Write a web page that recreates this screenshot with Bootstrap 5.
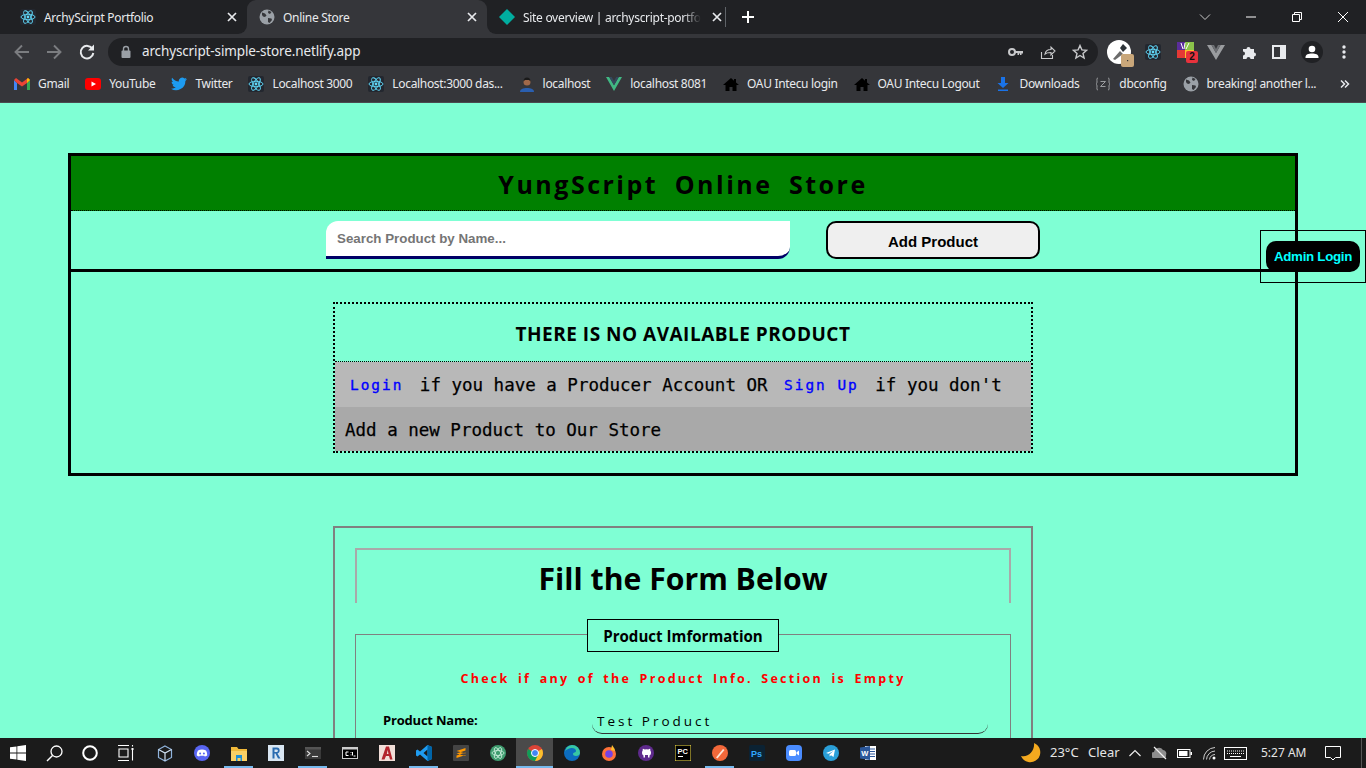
<!DOCTYPE html>
<html lang="en">
<head>
<meta charset="utf-8">
<title>Online Store</title>
<link href="https://cdn.jsdelivr.net/npm/bootstrap@5.3.0/dist/css/bootstrap.min.css" rel="stylesheet">
<style>
html,body{height:100%;overflow:hidden}
body{background:#7fffd4;color:#000;font-family:"Open Sans",sans-serif}
.shell{height:768px}
.ui{font-family:"Noto Sans",sans-serif;color:#e8eaed;font-size:12px}
.tabstrip{height:34px;background:#202124}
.tabx{height:34px;width:240px;padding:0 7px 0 12px;gap:8px;flex:none;position:relative;white-space:nowrap}
.tabx.first{width:239px;margin-left:8px}
.tabx.now{background:#35363a;border-radius:9px 9px 0 0}
.tabx .ttl{flex:1;letter-spacing:-.3px;padding-top:1px}
.tabx.last{width:238px}
.tabx.last .ttl{-webkit-mask-image:linear-gradient(90deg,#000 90%,transparent);mask-image:linear-gradient(90deg,#000 90%,transparent)}
.tabx.last::before,.tabx.first::after{content:"";position:absolute;bottom:0;width:9px;height:9px;background:#35363a}
.tabx.last::before{left:0}
.tabx.first::after{right:0}
.tabx.last .corner,.tabx.first .corner{position:absolute;bottom:0;width:9px;height:9px;background:#202124;z-index:1}
.tabx.last .corner{left:0;border-bottom-left-radius:9px}
.tabx.first .corner{right:0;border-bottom-right-radius:9px}
.vsep{width:1px;height:20px;background:#5f6368;margin:0 14px 0 0}
.winbtns{margin-left:auto;display:flex;align-items:center}
.winbtn{width:46px;display:flex;justify-content:center}
.toolbar{height:33px;background:#35363a;padding:2px 0 0 12px}
.omni{width:990px;height:28px;background:#202124;border-radius:14px;margin-left:12px;padding:0 10px 0 12px;font-size:13.5px;letter-spacing:-.13px}
.urltxt{margin-left:10px}
.bookbar{height:36px;background:#35363a;border-bottom:1px solid #4a4c50;padding:0 0 1px 14px;gap:16px;white-space:nowrap}
.bm{gap:8px;letter-spacing:-.33px}
.pagearea{height:635px;overflow:hidden;position:relative;background:#7fffd4}
.storebox{margin:50px 68px 0;border:3px solid #000;height:323px}
.storehead{height:55px;background:#008000;border-bottom:1px dotted #000;font-size:25px;font-weight:700;letter-spacing:2.5px;word-spacing:7.500px;padding-top:4px}
.searchrow{height:61px;border-bottom:3px solid #000;gap:36px}
.searchin{width:464px;height:38px;background:#fff;border:0;border-bottom:3px solid #000066;border-radius:12px 0 12px 0;padding:0 11px;font:bold 13.33px "Liberation Sans",sans-serif;color:#000;outline:0}
.searchin::placeholder{color:#757575;opacity:1}
.addbtn{width:214px;height:38px;background:#efefef;border:2px solid #000;border-radius:10px;font:bold 15px "Liberation Sans",sans-serif;color:#000;padding:2px 0 0}
.noticebox{width:700px;height:151px;margin:30px auto 0;border:2px dotted #000}
.noticehead{height:58px;border-bottom:1px dotted #000;font-size:19px;font-weight:700;letter-spacing:.5px;padding-top:3px}
.mono{font-family:"DejaVu Sans Mono",monospace;font-size:17.5px;white-space:pre;-webkit-text-stroke:.25px #000;padding-top:2px}
.rowa{height:45px;background:#b8b8b8;padding-left:15px;padding-top:1px}
.rowb{height:44px;background:#a9a9a9;padding-left:10px}
.blink{color:#00f;font-weight:400;font-size:14.4px;letter-spacing:2px;margin:0 6px 0 0;padding-top:2px;-webkit-text-stroke:.35px #00f}
.blink.mid{margin-left:6px}
.formbox{width:700px;height:400px;margin:50px auto 0;border:2px solid #808080;padding:20px 20px 0}
.fillhead{height:55px;border:2px solid #a9a9a9;border-bottom:0;font-size:30.2px;font-weight:700;line-height:1;padding-top:14px}
.fset{margin-top:31px;border-top:1px solid #808080;border-left:1px solid #808080;border-right:1px solid #808080;height:200px;position:relative;padding-top:35px}
.legendx{position:absolute;top:-16px;left:231px;width:192px;height:33px;border:1px solid #000;background:#7fffd4;font-size:15.1px;font-weight:700;padding-top:1px}
.warn{color:#f00;font-size:12.5px;font-weight:700;letter-spacing:2.25px;word-spacing:3px;line-height:17px}
.frow{margin-top:23px;padding-left:27px}
.flabel{width:209px;font:bold 13px "Open Sans",sans-serif;letter-spacing:-.2px;padding-bottom:4px}
.finput{width:396px;height:24px;border:0;border-bottom:1px solid #333;border-radius:0 0 10px 10px;background:transparent;padding:0 5px 2px 5px;font-family:"Open Sans",sans-serif;font-size:13.5px;letter-spacing:3px;color:#000;outline:0}
.adminwrap{position:absolute;left:1260px;top:127px;width:106px;height:53px;border:1px solid #000;padding:10px 0 0 5px}
.adminbtn{width:94px;height:31px;background:#000;color:#0ff;border:0;border-radius:10px;font:bold 13.33px "Liberation Sans",sans-serif;padding:0;letter-spacing:-.3px}
.taskbar{height:30px;background:#1b1b1b;color:#e6e6e6;font-family:"Noto Sans",sans-serif;font-size:13px;position:relative}
.tslot{width:36px;height:30px;flex:none;display:flex;align-items:center;justify-content:center;position:relative}
.tslot.w{width:37px}
.tslot.on::after{content:"";position:absolute;bottom:0;left:4px;right:4px;height:2px;background:#76b9ed}
.tslot.act{background:#4a4a4a}
.tslot.act::after{content:"";position:absolute;bottom:0;height:2px;background:#76b9ed;left:0;right:0}
.spacer{width:2px;flex:none}
.trayi{position:absolute;top:0;height:30px;display:flex;align-items:center;justify-content:center}
svg{display:block;flex:none}
.tb1{margin-left:12px}.tb2{margin-left:14px}
.ext0{width:24px;height:24px;margin-left:9px}.extbadge{left:14px;top:14px}
.ext1{margin-left:14px}.ext2{width:20px;height:20px;margin-left:16px}
.count2{left:9px;top:9px;width:12px;height:12px;background:#e8323c;color:#111;border-radius:2px;font:bold 10px "Liberation Sans",sans-serif}
.ext3{margin-left:10px}.ext4{margin-left:17px}.ext5{margin-left:14px}.ext6{margin-left:15px}.ext7{margin-left:19px}
.t1{left:1019px;width:24px}.t2{left:1050px}.t3{left:1088px}.t4{left:1129px;width:12px}.t5{left:1152px;width:16px}.t6{left:1177px;width:15px}.t7{left:1203px;width:13px}.t8{left:1224px;width:23px}.t9{left:1261px;font-size:12px}.t10{left:1325px;width:16px}.t11{left:1361px;width:1px;background:#555}
</style>
</head>
<body>
<svg width="0" height="0" class="position-absolute">
<defs>
<symbol id="react" viewBox="0 0 16 16"><rect width="16" height="16" rx="2" fill="#23272f"/><g fill="none" stroke="#61dafb" stroke-width=".9"><ellipse cx="8" cy="8" rx="7" ry="2.7"/><ellipse cx="8" cy="8" rx="7" ry="2.7" transform="rotate(60 8 8)"/><ellipse cx="8" cy="8" rx="7" ry="2.7" transform="rotate(120 8 8)"/></g><circle cx="8" cy="8" r="1.4" fill="#61dafb"/></symbol>
<symbol id="globe" viewBox="0 0 16 16"><circle cx="8" cy="8" r="7.5" fill="#9aa0a6"/><path d="M3 3.5l3 1 1.500 2-1.500 1.500-2-.5-1-1.500zM9 9l3.500.5.500 1.500-2.500 3-1.500-1zM9.500 1.500l3 1.500-1.500 2-2-1z" fill="#35363a"/></symbol>
<symbol id="house" viewBox="0 0 16 16"><path d="M8 2L0 9h2.500v6h4v-4h3v4h4V9H16l-3-2.600V3h-2v1.700z" fill="#000"/></symbol>
</defs>
</svg>
<div class="shell d-flex flex-column">
<div class="ui tabstrip d-flex align-items-center">
  <div class="tabx first d-flex align-items-center"><span class="corner"></span><svg width="16" height="16"><use href="#react"/></svg><span class="ttl">ArchyScirpt Portfolio</span><svg width="16" height="16" viewBox="0 0 16 16"><path d="M4 4l8 8M12 4l-8 8" stroke="#e8eaed" stroke-width="1.700"/></svg></div>
  <div class="tabx now d-flex align-items-center"><svg width="16" height="16"><use href="#globe"/></svg><span class="ttl">Online Store</span><svg width="16" height="16" viewBox="0 0 16 16"><path d="M4 4l8 8M12 4l-8 8" stroke="#e8eaed" stroke-width="1.700"/></svg></div>
  <div class="tabx last d-flex align-items-center"><span class="corner"></span><svg width="16" height="16" viewBox="0 0 16 16"><path d="M8 0l8 8-8 8-8-8z" fill="#00ad9f"/></svg><span class="ttl">Site overview | archyscript-portfo</span><svg width="16" height="16" viewBox="0 0 16 16"><path d="M4 4l8 8M12 4l-8 8" stroke="#e8eaed" stroke-width="1.700"/></svg></div>
  <div class="vsep"></div>
  <svg width="16" height="16" viewBox="0 0 16 16"><path d="M8 2v12M2 8h12" stroke="#fff" stroke-width="2"/></svg>
  <div class="winbtns">
    <div class="winbtn me-0"><svg width="12" height="12" viewBox="0 0 12 12"><path d="M1 3.500l5 5 5-5" fill="none" stroke="#c8c8c8"/></svg></div>
    <div class="winbtn"><svg width="12" height="12" viewBox="0 0 12 12"><path d="M1 6h10" stroke="#fff"/></svg></div>
    <div class="winbtn"><svg width="12" height="12" viewBox="0 0 12 12"><path d="M1.500 3.500h7v7h-7zM3.500 3.500v-2h7v7h-2" fill="none" stroke="#fff"/></svg></div>
    <div class="winbtn"><svg width="12" height="12" viewBox="0 0 12 12"><path d="M1 1l10 10M11 1L1 11" stroke="#fff"/></svg></div>
  </div>
</div>
<div class="ui toolbar d-flex align-items-center">
  <svg width="20" height="20" viewBox="0 0 20 20"><path d="M17 10H4.500M10 3.500L3.500 10l6.500 6.500" fill="none" stroke="#7b7d80" stroke-width="1.900"/></svg>
  <svg width="20" height="20" viewBox="0 0 20 20" class="tb1"><path d="M3 10h12.500M10 3.500l6.500 6.500-6.500 6.500" fill="none" stroke="#7b7d80" stroke-width="1.900"/></svg>
  <svg width="18" height="18" viewBox="0 0 18 18" class="tb2"><path d="M14.500 6A6.300 6.300 0 1 0 15.300 10" fill="none" stroke="#e8eaed" stroke-width="2"/><path d="M16 1.500v6h-6z" fill="#e8eaed"/></svg>
  <div class="omni d-flex align-items-center">
    <svg width="12" height="14" viewBox="0 0 12 14"><path d="M3.500 6V4a2.500 2.500 0 0 1 5 0v2" fill="none" stroke="#9aa0a6" stroke-width="1.400"/><rect x="1.500" y="5.500" width="9" height="7.500" rx="1" fill="#9aa0a6"/></svg>
    <span class="urltxt flex-grow-1">archyscript-simple-store.netlify.app</span>
    <svg width="16" height="16" viewBox="0 0 16 16"><circle cx="4" cy="8" r="3" fill="none" stroke="#c8c9cb" stroke-width="2"/><path d="M7 7h8v2.500h-1.500V11H12V9.500h-1V11H9.500V9H7z" fill="#c8c9cb"/></svg>
    <svg class="ms-3" width="16" height="16" viewBox="0 0 16 16"><path d="M1.500 8v6.500h11V11M5 10c.5-3 3-4.500 6-4.500V3l4 4-4 4V8.500c-2.500 0-4.500 0-6 1.500z" fill="none" stroke="#c8c9cb" stroke-width="1.100"/></svg>
    <svg class="ms-3" width="16" height="16" viewBox="0 0 16 16"><path d="M8 1.500l1.900 4.400 4.700.4-3.600 3.100 1.100 4.600L8 11.500l-4.100 2.500 1.100-4.600L1.400 6.300l4.700-.4z" fill="none" stroke="#c8c9cb" stroke-width="1.400"/></svg>
  </div>
  <div class="position-relative ext0">
    <svg width="24" height="24" viewBox="0 0 24 24"><circle cx="12" cy="12" r="12" fill="#fff"/><path d="M6 19l7-8 3 3-8 6z" fill="#6b6b6b"/><path d="M13 8l3-4 4 4-4 4z" fill="#2d3338"/></svg>
    <svg class="position-absolute extbadge" width="13" height="13" viewBox="0 0 13 13"><rect width="13" height="13" rx="2" fill="#c9a77a"/><rect x="6" y="6" width="1.200" height="1.200" fill="#333"/></svg>
  </div>
  <svg width="16" height="16" class="ext1"><use href="#react"/></svg>
  <div class="position-relative ext2">
    <svg width="17" height="16" viewBox="0 0 17 16"><path d="M0 0h8v8H0z" fill="#5b2d9b"/><path d="M8 0h9v8H8z" fill="#8bc34a"/><path d="M0 8h8v8H0z" fill="#e53935"/><path d="M8 8h9v8H8z" fill="#fbc02d"/><path d="M4 1l2 6M8 1L7 7M12 1L9 7" stroke="#fff"/></svg>
    <span class="position-absolute d-flex align-items-center justify-content-center count2">2</span>
  </div>
  <svg width="18" height="16" viewBox="0 0 18 16" class="ext3"><path d="M0 1h4.500L9 9l4.500-8H18L9 16z" fill="#9a9c9f"/><path d="M4.500 1H7l2 4 2-4h2.500L9 9z" fill="#6e7074"/></svg>
  <svg width="16" height="16" viewBox="0 0 16 16" class="ext4"><path d="M1 5h3.500a2 2 0 1 1 4 0H12v3.500a2 2 0 1 1 0 4V15H8.500a2 2 0 1 0-4 0H1v-3.500a2 2 0 1 0 0-4z" fill="#e8eaed"/></svg>
  <svg width="14" height="14" viewBox="0 0 14 14" class="ext5"><path d="M0 0h14v14H0z" fill="#e8eaed"/><path d="M2 2h6v10H2z" fill="#35363a"/></svg>
  <svg width="22" height="22" viewBox="0 0 22 22" class="ext6"><circle cx="11" cy="11" r="11" fill="#202124"/><circle cx="11" cy="8" r="3.300" fill="#fff"/><path d="M4.500 16c0-2.500 3-3.500 6.500-3.500s6.500 1 6.500 3.500v1h-13z" fill="#fff"/></svg>
  <svg width="4" height="14" viewBox="0 0 4 14" class="ext7"><circle cx="2" cy="2" r="1.700" fill="#e8eaed"/><circle cx="2" cy="7" r="1.700" fill="#e8eaed"/><circle cx="2" cy="12" r="1.700" fill="#e8eaed"/></svg>
</div>
<div class="ui bookbar d-flex align-items-center">
  <div class="bm d-flex align-items-center"><svg width="16" height="12" viewBox="0 0 16 12"><path d="M0 2v10h3V5z" fill="#4285f4"/><path d="M13 5v7h3V2z" fill="#34a853"/><path d="M0 2l3 3 5 3.500L13 5l3-3-2-2-6 4.500L2 0z" fill="#ea4335"/><path d="M13 5l3-3-2-2-1 1z" fill="#fbbc04"/></svg><span>Gmail</span></div>
  <div class="bm d-flex align-items-center"><svg width="16" height="12" viewBox="0 0 16 12"><rect width="16" height="12" rx="3" fill="#f00"/><path d="M6.500 3.500v5L11 6z" fill="#fff"/></svg><span>YouTube</span></div>
  <div class="bm d-flex align-items-center"><svg width="16" height="14" viewBox="0 0 16 14"><path d="M16 2c-.6.300-1.200.4-1.900.5.700-.4 1.200-1 1.400-1.800-.6.400-1.300.7-2 .8a3.300 3.300 0 0 0-5.600 3C5.200 4.400 2.800 3.100 1.100.7.300 2.200.7 4.100 2.100 5.100c-.5 0-1-.2-1.500-.4 0 1.600 1.100 3 2.600 3.300-.5.100-1 .1-1.500 0 .4 1.300 1.600 2.300 3.100 2.300A6.600 6.600 0 0 1 0 11.700 9.300 9.300 0 0 0 14.400 4c.6-.5 1.200-1.200 1.600-2z" fill="#1d9bf0"/></svg><span>Twitter</span></div>
  <div class="bm d-flex align-items-center"><svg width="16" height="16"><use href="#react"/></svg><span>Localhost 3000</span></div>
  <div class="bm d-flex align-items-center"><svg width="16" height="16"><use href="#react"/></svg><span>Localhost:3000 das...</span></div>
  <div class="bm d-flex align-items-center"><svg width="16" height="16" viewBox="0 0 16 16"><path d="M1 16c0-3 3-4 7-4s7 1 7 4z" fill="#2a5fb0"/><circle cx="8" cy="6" r="3.500" fill="#a0694a"/><path d="M4.500 5.500C4.500 3 6 1.500 8 1.500s3.500 1.500 3.500 4L10 4H6z" fill="#1a1a1a"/></svg><span>localhost</span></div>
  <div class="bm d-flex align-items-center"><svg width="16" height="14" viewBox="0 0 16 14"><path d="M0 0h3.200L8 8.300 12.800 0H16L8 14z" fill="#41b883"/><path d="M3.200 0h2.500L8 4l2.300-4h2.500L8 8.300z" fill="#35495e"/></svg><span>localhost 8081</span></div>
  <div class="bm d-flex align-items-center"><svg width="16" height="16"><use href="#house"/></svg><span>OAU Intecu login</span></div>
  <div class="bm d-flex align-items-center"><svg width="16" height="16"><use href="#house"/></svg><span>OAU Intecu Logout</span></div>
  <div class="bm d-flex align-items-center"><svg width="16" height="16" viewBox="0 0 16 16"><path d="M6 1h4v6h3.500L8 12 2.500 7H6zM3 13.500h10V15H3z" fill="#1a73e8"/></svg><span>Downloads</span></div>
  <div class="bm d-flex align-items-center"><svg width="16" height="14" viewBox="0 0 16 14"><path d="M3 1C1.500 1 2 2.500 2 5c0 1.500-1 2-1 2s1 .5 1 2c0 2.500-.5 4 1 4M13 1c1.500 0 1 1.500 1 4 0 1.500 1 2 1 2s-1 .5-1 2c0 2.500.5 4-1 4M5.500 4.500h5l-5 5h5" fill="none" stroke="#9a9c9f"/></svg><span>dbconfig</span></div>
  <div class="bm d-flex align-items-center"><svg width="16" height="16"><use href="#globe"/></svg><span>breaking! another l...</span></div>
  <svg width="10" height="10" viewBox="0 0 10 10" class="ms-2"><path d="M1 1.500L4.500 5 1 8.500M5 1.500L8.500 5 5 8.500" fill="none" stroke="#e8eaed" stroke-width="1.500"/></svg>
</div>
<div class="pagearea">
  <div class="storebox">
    <div class="storehead d-flex align-items-center justify-content-center">YungScript Online Store</div>
    <div class="searchrow d-flex align-items-center justify-content-center">
      <input class="searchin" type="text" placeholder="Search Product by Name...">
      <button class="addbtn" type="button">Add Product</button>
    </div>
    <div class="noticebox">
      <div class="noticehead d-flex align-items-center justify-content-center">THERE IS NO AVAILABLE PRODUCT</div>
      <div class="rowa mono d-flex align-items-center"><span class="blink">Login</span><span> if you have a Producer Account OR </span><span class="blink mid">Sign Up</span><span> if you don't</span></div>
      <div class="rowb mono d-flex align-items-center">Add a new Product to Our Store</div>
    </div>
  </div>
  <div class="formbox">
    <div class="fillhead text-center">Fill the Form Below</div>
    <div class="fset">
      <div class="legendx d-flex align-items-center justify-content-center">Product Imformation</div>
      <div class="warn text-center">Check if any of the Product Info. Section is Empty</div>
      <div class="frow d-flex align-items-center"><div class="flabel">Product Name:</div><input class="finput" type="text" value="Test Product"></div>
    </div>
  </div>
  <div class="adminwrap"><button class="adminbtn" type="button">Admin Login</button></div>
</div>
<div class="taskbar d-flex align-items-center">
  <div class="tslot"><svg width="16" height="16" viewBox="0 0 16 16"><path d="M0 2.300l6.500-.9v6.200H0zM7.300 1.300L16 0v7.600H7.300zM0 8.400h6.500v6.200L0 13.700zM7.300 8.400H16V16l-8.700-1.300z" fill="#fff"/></svg></div>
  <div class="tslot"><svg width="17" height="17" viewBox="0 0 17 17"><circle cx="10.500" cy="6.500" r="5.500" fill="none" stroke="#fff" stroke-width="1.300"/><path d="M6.500 10.500L1 16" stroke="#fff" stroke-width="1.500"/></svg></div>
  <div class="tslot"><svg width="16" height="16" viewBox="0 0 16 16"><circle cx="8" cy="8" r="6.800" fill="none" stroke="#fff" stroke-width="2"/></svg></div>
  <div class="tslot"><svg width="16" height="16" viewBox="0 0 16 16"><path d="M0 .500h11M0 15.500h11M1 4h9v8H1zM14.500 0v1.500M14.500 4.500v11" fill="none" stroke="#fff" stroke-width="1.100"/><rect x="13.500" y="3" width="2" height="2" fill="#fff"/></svg></div>
  <div class="spacer"></div>
  <div class="tslot w"><svg width="16" height="17" viewBox="0 0 16 17"><path d="M8 1l6.500 3.500v8L8 16l-6.500-3.500v-8z" fill="none" stroke="#8fb3dc" stroke-width="1.200"/><path d="M1.500 4.500L8 8l6.500-3.500M8 8v8" fill="none" stroke="#cfe0f2" stroke-width="1.200"/></svg></div>
  <div class="tslot w"><svg width="16" height="16" viewBox="0 0 16 16"><circle cx="8" cy="8" r="8" fill="#5865f2"/><path d="M4 5.500c2.500-1.300 5.500-1.300 8 0 1 1.700 1.300 3.500 1.200 5-1 .7-1.800 1-2.400 1.100l-.6-.9H5.800l-.6.900c-.6-.1-1.400-.4-2.400-1.100-.1-1.500.2-3.300 1.200-5z" fill="#fff"/><circle cx="6.100" cy="8.400" r="1" fill="#5865f2"/><circle cx="9.900" cy="8.400" r="1" fill="#5865f2"/></svg></div>
  <div class="tslot w on"><svg width="16" height="15" viewBox="0 0 16 15"><path d="M0 1h6l1.500 2H16v12H0z" fill="#f0b93a"/><path d="M0 5h16v10H0z" fill="#fad165"/><path d="M5 9h6v6H9.500v-3h-3v3H5z" fill="#1d8fd6"/></svg></div>
  <div class="tslot w"><svg width="16" height="16" viewBox="0 0 16 16"><rect width="16" height="16" fill="#d9e6f2"/><path d="M4.500 2.500h4.500c3.500 0 3.500 5.500 .5 6l3 5h-2.500l-2.500-5H6.500v5h-2zM6.500 4.500v2.500h2.500c1.200 0 1.200-2.500 0-2.500z" fill="#2b6cb0"/></svg></div>
  <div class="tslot w on"><svg width="16" height="12" viewBox="0 0 16 12"><rect width="16" height="12" fill="#3a3a3a"/><rect width="16" height="2.500" fill="#555"/><path d="M2 4l3 2.500L2 9" fill="none" stroke="#ddd" stroke-width="1.100"/><path d="M7 9.500h6" stroke="#ddd" stroke-width="1.100"/></svg></div>
  <div class="tslot w"><svg width="16" height="12" viewBox="0 0 16 12"><rect x=".5" y=".5" width="15" height="11" fill="#000" stroke="#ccc"/><rect x=".5" y=".5" width="15" height="2" fill="#ccc"/><path d="M6.500 5H4v3.500h2.500M9 5.200v.8M9 7.500v.8M10.500 5v3.500M13.500 9h-2" fill="none" stroke="#fff"/></svg></div>
  <div class="tslot w"><svg width="16" height="16" viewBox="0 0 16 16"><rect width="16" height="16" fill="#f1ded8"/><path d="M7 1.500h3l3.500 13h-2.500L10 11H7l-1.500 3.500H2.500zM7.800 9h1.700L8.700 5z" fill="#b3242c"/></svg></div>
  <div class="tslot w on"><svg width="16" height="16" viewBox="0 0 16 16"><path d="M11.500 0L16 2v12l-4.500 2L4 9.500l-2.500 2L0 10.500v-5L1.500 4.500l2.500 2zM11.500 4.500L7.500 8l4 3.500z" fill="#1f9cf0"/><path d="M11.500 0L16 2v12l-4.500 2z" fill="#0065a9"/></svg></div>
  <div class="tslot w"><svg width="16" height="16" viewBox="0 0 16 16"><rect width="16" height="16" rx="1" fill="#444"/><path d="M3.500 6L12.500 3v2.500L3.500 8.500zM3.500 10.500l9-3v2.500l-9 3zM3.500 8.500l9 2.500v-2.500L3.500 6z" fill="#ff9800"/></svg></div>
  <div class="tslot w"><svg width="16" height="16" viewBox="0 0 16 16"><circle cx="8" cy="8" r="8" fill="#3f9c6f"/><g fill="none" stroke="#cdeedd" stroke-width=".8"><ellipse cx="8" cy="8" rx="6" ry="2.500"/><ellipse cx="8" cy="8" rx="6" ry="2.500" transform="rotate(60 8 8)"/><ellipse cx="8" cy="8" rx="6" ry="2.500" transform="rotate(120 8 8)"/></g></svg></div>
  <div class="tslot w act"><svg width="16" height="16" viewBox="0 0 16 16"><circle cx="8" cy="8" r="8" fill="#db4437"/><path d="M8 8L14.900 4A8 8 0 0 1 8 16z" fill="#fbc02d"/><path d="M8 8l-6.900-4A8 8 0 0 0 8 16l3-6z" fill="#0f9d58"/><circle cx="8" cy="8" r="3.500" fill="#4285f4" stroke="#fff"/></svg></div>
  <div class="tslot w"><svg width="16" height="16" viewBox="0 0 16 16"><circle cx="8" cy="8" r="8" fill="#0c6cbf"/><path d="M8 0a8 8 0 0 1 8 8c0 2-2 3-4 3s-3-1-3-2c0-2 3-1 3-3S10 3 8 3 2 4 1 7A8 8 0 0 1 8 0z" fill="#37c7a3"/></svg></div>
  <div class="tslot w"><svg width="16" height="16" viewBox="0 0 16 16"><circle cx="8" cy="9" r="7" fill="#ff7139"/><path d="M11 0c1 2 3 3 3 6l-4-1z" fill="#ffbd2e"/><circle cx="8" cy="9" r="3.800" fill="#7542e5"/></svg></div>
  <div class="tslot w"><svg width="16" height="16" viewBox="0 0 16 16"><circle cx="8" cy="8" r="8" fill="#5e2a8c"/><path d="M5.500 12.500v-2c-1-.5-1.500-1.500-1.500-3 0-.8.300-1.500.7-2-.1-.6 0-1.200.2-1.700.7 0 1.300.3 1.800.7a6 6 0 0 1 3.600 0c.5-.4 1.100-.7 1.800-.7.200.5.300 1.100.2 1.700.4.500.7 1.200.7 2 0 1.500-.5 2.500-1.500 3v2h-1.500V10H7v2.500z" fill="#fff"/></svg></div>
  <div class="tslot w"><svg width="16" height="16" viewBox="0 0 16 16"><rect width="16" height="16" fill="#000" stroke="#ffe94d"/><path d="M3 11.500h5" stroke="#fff"/><text x="2.500" y="8.500" font-family="Liberation Sans" font-size="7.500" font-weight="700" fill="#fff">PC</text></svg></div>
  <div class="tslot w on"><svg width="16" height="16" viewBox="0 0 16 16"><circle cx="8" cy="8" r="8" fill="#f2683a"/><path d="M4 12.500L11 4l1.500 1-7 8.500z" fill="#fce4d6"/></svg></div>
  <div class="tslot w"><svg width="16" height="16" viewBox="0 0 16 16"><rect width="16" height="16" rx="1.500" fill="#0b2233"/><text x="2" y="11.500" font-family="Liberation Sans" font-size="9" font-weight="700" fill="#31a8ff">Ps</text></svg></div>
  <div class="tslot w"><svg width="16" height="16" viewBox="0 0 16 16"><rect width="16" height="16" rx="4" fill="#4a8cff"/><rect x="3" y="5" width="7" height="6" rx="1.500" fill="#fff"/><path d="M10.500 7.300L13 5.500v5l-2.500-1.800z" fill="#fff"/></svg></div>
  <div class="tslot w"><svg width="16" height="16" viewBox="0 0 16 16"><circle cx="8" cy="8" r="8" fill="#2a9fd8"/><path d="M3 8l9-3.500-1.500 7.500L8 10.300 6.700 11.500 6.500 9.500 10.500 6 5.500 8.800z" fill="#fff"/></svg></div>
  <div class="tslot w"><svg width="16" height="16" viewBox="0 0 16 16"><rect x="5" y="1" width="11" height="14" fill="#fff"/><path d="M10 4h5M10 6.500h5M10 9h5M10 11.500h5" stroke="#2b579a"/><path d="M0 2.500L10 1v14L0 13.500z" fill="#2b579a"/><text x="1.300" y="10.800" font-family="Liberation Sans" font-size="7.500" font-weight="700" fill="#fff">W</text></svg></div>
  <div class="trayi t1"><svg width="22" height="22" viewBox="0 0 22 22"><path d="M14 1a10 10 0 1 1-13 13c7 2 14-5 13-13z" fill="#f4a91f"/></svg></div>
  <div class="trayi t2">23°C</div>
  <div class="trayi t3">Clear</div>
  <div class="trayi t4"><svg width="12" height="8" viewBox="0 0 12 8"><path d="M.5 7L6 1.500 11.500 7" fill="none" stroke="#eee" stroke-width="1.200"/></svg></div>
  <div class="trayi t5"><svg width="16" height="14" viewBox="0 0 16 14"><path d="M2 12a3 3 0 0 1 0-6 5 5 0 0 1 9-2 3.500 3.500 0 0 1 3 5 3 3 0 0 1-1 3z" fill="#8d8d8d"/><path d="M2 1l12 12" stroke="#eee" stroke-width="1.200"/></svg></div>
  <div class="trayi t6"><svg width="15" height="9" viewBox="0 0 15 9"><rect x=".5" y=".5" width="12.500" height="8" fill="none" stroke="#fff"/><rect x="2" y="2" width="8.500" height="5" fill="#fff"/><rect x="13.500" y="3" width="1.500" height="3" fill="#fff"/></svg></div>
  <div class="trayi t7"><svg width="13" height="13" viewBox="0 0 13 13"><path d="M.5 12.500A12 12 0 0 1 12 .5M3.500 12.500A9 9 0 0 1 12 4M6.500 12.500A6 6 0 0 1 12 7.500" fill="none" stroke="#ccc"/><circle cx="11" cy="11" r="1.500" fill="#fff"/></svg></div>
  <div class="trayi t8"><svg width="23" height="13" viewBox="0 0 23 13"><rect x=".5" y=".5" width="22" height="12" fill="none" stroke="#fff"/><path d="M3 4h17M3 6.500h17" stroke="#fff" stroke-dasharray="1 1"/><path d="M6 9.500h11" stroke="#fff"/></svg></div>
  <div class="trayi t9">5:27 AM</div>
  <div class="trayi t10"><svg width="16" height="15" viewBox="0 0 16 15"><path d="M.5.500h15v11h-5L8 14l-2.500-2.500h-5z" fill="none" stroke="#fff"/></svg></div>
  <div class="trayi t11"></div>
</div>
</div>
</body>
</html>
